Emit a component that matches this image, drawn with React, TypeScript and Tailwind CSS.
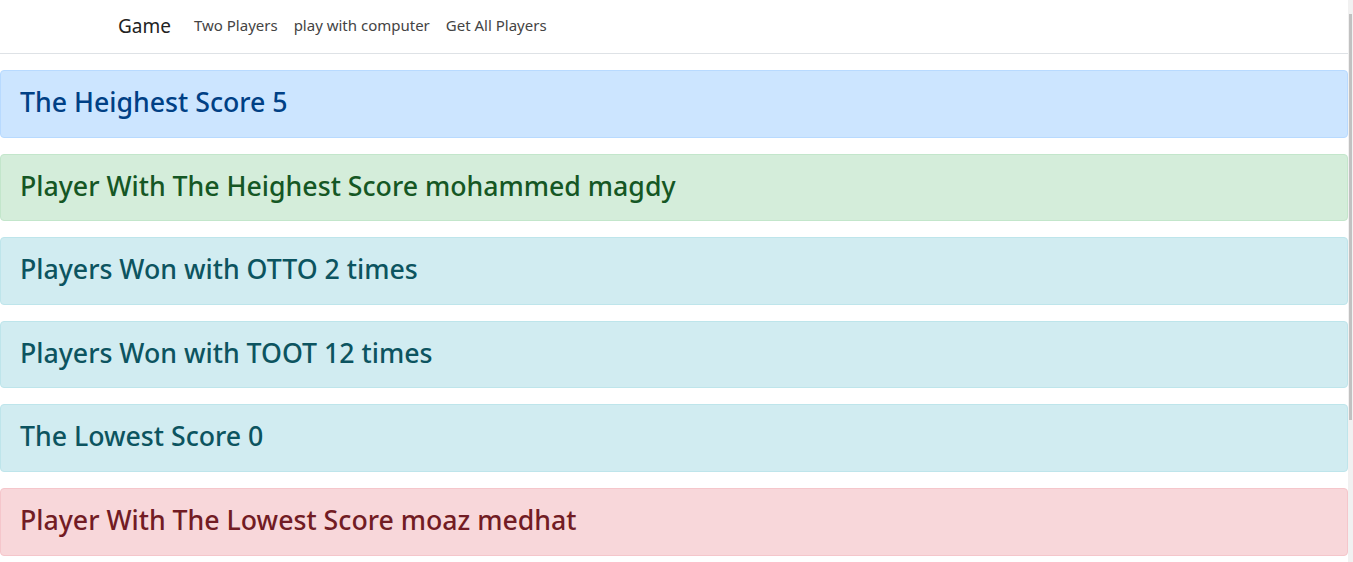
const alerts = [
  { text: "The Heighest Score 5", cls: "bg-[#cce5ff] border-[#b8daff] text-[#004085]" },
  { text: "Player With The Heighest Score mohammed magdy", cls: "bg-[#d4edda] border-[#c3e6cb] text-[#155724]" },
  { text: "Players Won with OTTO 2 times", cls: "bg-[#d1ecf1] border-[#bee5eb] text-[#0c5460]" },
  { text: "Players Won with TOOT 12 times", cls: "bg-[#d1ecf1] border-[#bee5eb] text-[#0c5460]" },
  { text: "The Lowest Score 0", cls: "bg-[#d1ecf1] border-[#bee5eb] text-[#0c5460]" },
  { text: "Player With The Lowest Score moaz medhat", cls: "bg-[#f8d7da] border-[#f5c6cb] text-[#721c24]" },
];

const App = () => {
  return (
    <div className="flex h-[562px] overflow-hidden bg-white font-['Noto_Sans',sans-serif]">
      <div className="flex-1">
        <nav className="h-[54px] border-b border-[#dee2e6]">
          <div className="mx-auto flex h-full w-[1140px] items-center px-[14px]">
            <a className="mr-[23px] text-[19px] text-[#222]">Game</a>
            <div className="-mt-[2px] flex gap-[16px] text-[15px] text-[#444]">
              <a>Two Players</a>
              <a>play with computer</a>
              <a>Get All Players</a>
            </div>
          </div>
        </nav>
        <div className="mt-[16px] space-y-[16px]">
          {alerts.map((a) => (
            <div
              key={a.text}
              className={`rounded-[4px] border pt-[14px] pr-[20px] pb-[10px] pl-[19px] ${a.cls}`}
            >
              <h3 className="mb-[8px] text-[26.7px] leading-[33.6px] font-medium">{a.text}</h3>
            </div>
          ))}
        </div>
      </div>
      <div className="w-[5px] bg-[#f1f1f1] pt-[14px]">
        <div className="ml-[1px] h-[406px] w-[3px] bg-[#c1c1c1]" />
      </div>
    </div>
  );
};

export default App;
